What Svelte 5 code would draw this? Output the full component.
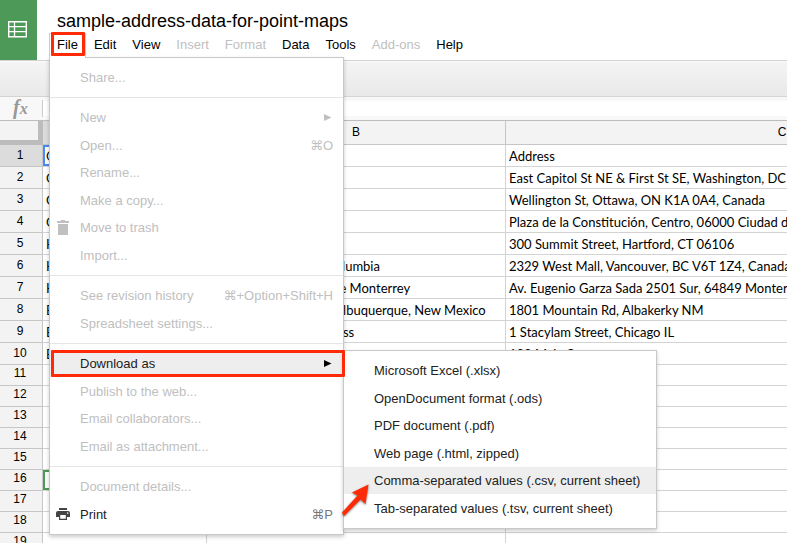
<script>
  const menus = [
    { label: 'Edit' },
    { label: 'View' },
    { label: 'Insert', off: true },
    { label: 'Format', off: true },
    { label: 'Data' },
    { label: 'Tools' },
    { label: 'Add-ons', off: true },
    { label: 'Help' },
  ];

  const groups = [
    [{ label: 'Share...', off: true }],
    [
      { label: 'New', off: true, arrow: true },
      { label: 'Open...', off: true, keys: '⌘O' },
      { label: 'Rename...', off: true },
      { label: 'Make a copy...', off: true },
      { label: 'Move to trash', off: true, icon: 'trash' },
      { label: 'Import...', off: true },
    ],
    [
      { label: 'See revision history', off: true, keys: '⌘+Option+Shift+H' },
      { label: 'Spreadsheet settings...', off: true },
    ],
    [
      { label: 'Download as', arrow: true, active: true },
      { label: 'Publish to the web...', off: true },
      { label: 'Email collaborators...', off: true },
      { label: 'Email as attachment...', off: true },
    ],
    [
      { label: 'Document details...', off: true },
      { label: 'Print', icon: 'print', keys: '⌘P' },
    ],
  ];

  const formats = [
    'Microsoft Excel (.xlsx)',
    'OpenDocument format (.ods)',
    'PDF document (.pdf)',
    'Web page (.html, zipped)',
    'Comma-separated values (.csv, current sheet)',
    'Tab-separated values (.tsv, current sheet)',
  ];

  const data = [
    ['Group', 'Name', 'Address'],
    ['Capitol', 'United States', 'East Capitol St NE & First St SE, Washington, DC 20004'],
    ['Capitol', 'Canada', 'Wellington St, Ottawa, ON K1A 0A4, Canada'],
    ['Capitol', 'Mexico', 'Plaza de la Constitución, Centro, 06000 Ciudad de México'],
    ['Higher Ed', 'Trinity College', '300 Summit Street, Hartford, CT 06106'],
    ['Higher Ed', 'University of British Columbia', '2329 West Mall, Vancouver, BC V6T 1Z4, Canada'],
    ['Higher Ed', 'Instituto Tecnológico de Monterrey', 'Av. Eugenio Garza Sada 2501 Sur, 64849 Monterrey, Mexico'],
    ['Business', 'Misspelled address in Albuquerque, New Mexico', '1801 Mountain Rd, Albakerky NM'],
    ['Business', 'Misspelled street address', '1 Stacylam Street, Chicago IL'],
    ['Business', 'Incomplete address, street', '123 Main Street'],
  ];
  const rows = Array.from({ length: 40 }, (_, i) => data[i] ?? ['', '', '']);
</script>

<main>
  <header>
    <a class="logo" href="#home" aria-label="Sheets home">
      <svg width="19" height="17" viewBox="0 0 19 17" fill="none" stroke="#fff">
        <path stroke-width="1.4" d="M.7.7h17.6v15H.7z" />
        <path stroke-width="1.3" d="M.7 5.6h17.6M.7 10.6h17.6M6.5.7v15" />
      </svg>
    </a>
    <div class="heading">
      <h1>sample-address-data-for-point-maps</h1>
      <nav>
        <div class="file">
          <button class="file-tab" aria-expanded="true">File</button>
          <div class="menu">
            {#each groups as group}
              <ul>
                {#each group as item}
                  <li class:marked={item.active}>
                    <button class="item" class:active={item.active} disabled={item.off}>
                      <span class="icon">
                        {#if item.icon === 'trash'}
                          <svg width="14" height="15" viewBox="0 0 14 15" fill="currentColor">
                            <path d="M1 1h4V0h4v1h4v2H1zM2 4h10v11H2z" />
                          </svg>
                        {:else if item.icon === 'print'}
                          <svg width="14" height="12" viewBox="0 0 14 12" fill="#444">
                            <path d="M3 0h8v2H3z" />
                            <path fill-rule="evenodd" d="M2 3h10q2 0 2 2v4h-3v3H3V9H0V5q0-2 2-2zM4.200 7v3.800h5.600V7zM11 4.500v1.200h1.300V4.500z" />
                          </svg>
                        {/if}
                      </span>
                      <span class="label">{item.label}</span>
                      {#if item.keys}<span class="keys">{item.keys}</span>{/if}
                      {#if item.arrow}
                        <svg class="arrow" width="8" height="7" viewBox="0 0 8 7" fill="currentColor"><path d="M0 0l7.500 3.500L0 7z" /></svg>
                      {/if}
                    </button>
                    {#if item.active}
                      <div class="submenu">
                        <ul>
                          {#each formats as format, i}
                            <li><button class="item format" class:active={i === 4}>{format}</button></li>
                          {/each}
                        </ul>
                        <svg class="pointer" width="34" height="38" viewBox="0 0 34 38">
                          <path d="M27.500 3.500L11 11.500l5.500 3L1 31.500l2 3.500L19.500 18.500l5 4.500z" fill="#ff2b06" />
                        </svg>
                      </div>
                    {/if}
                  </li>
                {/each}
              </ul>
            {/each}
          </div>
        </div>
        {#each menus as menu}
          <button class="top" disabled={menu.off}>{menu.label}</button>
        {/each}
      </nav>
    </div>
  </header>

  <div class="toolbar"></div>

  <div class="formula">
    <label for="fx"><i>f</i><i class="x">x</i></label>
    <input id="fx" type="text" />
  </div>

  <table>
    <colgroup>
      <col class="num" /><col class="a" /><col class="b" /><col class="c" />
    </colgroup>
    <thead>
      <tr><th class="corner"></th><th class="current">A</th><th>B</th><th>C</th></tr>
    </thead>
    <tbody>
      {#each rows as row, i}
        <tr class:short={i > 9}>
          <th class:current={i === 0}>{i + 1}</th>
          {#each row as cell, j}
            <td class:selected={i === 0 && j === 0} class:other={i === 15 && j === 0}>{cell}</td>
          {/each}
        </tr>
      {/each}
    </tbody>
  </table>
</main>

<style>
  :global(body) {
    margin: 0;
    overflow: hidden;
  }
  main {
    height: 100vh;
    overflow: hidden;
    background: #fff;
    color: #000;
    font-family: 'Liberation Sans', Arial, sans-serif;
    font-size: 13px;
  }
  button {
    border: 0;
    margin: 0;
    background: none;
    font: inherit;
    color: inherit;
  }
  button:disabled {
    color: #c0c0c0;
  }
  header {
    display: flex;
    border-bottom: 1px solid #d2d2d2;
  }
  .logo {
    display: flex;
    align-items: center;
    justify-content: center;
    width: 37px;
    height: 60px;
    box-sizing: border-box;
    padding: 0 2px 2px 0;
    background: #4d9a58;
  }
  .heading {
    padding: 9px 0 0 12px;
  }
  h1 {
    margin: 0;
    padding-left: 8px;
    font-size: 18px;
    line-height: 24px;
    font-weight: 400;
    white-space: nowrap;
  }
  nav {
    display: flex;
  }
  .top {
    height: 24px;
    padding: 0 8px 2px;
  }
  .file {
    position: relative;
    z-index: 1;
  }
  .file-tab {
    position: relative;
    z-index: 2;
    display: block;
    height: 25px;
    padding: 0 7px 4px;
    border: solid #ccc;
    border-width: 1px 1px 0;
    background: #fff;
  }
  .file-tab::after {
    content: '';
    position: absolute;
    inset: -2px 0 2px 1px;
    border: 3px solid #ff2b06;
    border-radius: 1px;
  }
  .menu {
    position: absolute;
    top: 24px;
    left: 0;
    width: 293px;
    border: 1px solid #c8c8c8;
    background: #fff;
    box-shadow: 0 2px 4px rgba(0, 0, 0, 0.2);
  }
  ul {
    margin: 0;
    padding: 6px 0;
    list-style: none;
  }
  .menu > ul + ul {
    border-top: 1px solid #e5e5e5;
  }
  li {
    position: relative;
    height: 27px;
  }
  li:nth-child(even) {
    height: 28px;
  }
  .item {
    display: flex;
    align-items: center;
    width: 100%;
    height: 100%;
    padding: 0 10px 0 0;
    text-align: left;
    white-space: nowrap;
    color: #222;
  }
  .item.active {
    background: #eee;
  }
  .icon {
    display: flex;
    box-sizing: border-box;
    width: 30px;
    padding-left: 6px;
  }
  .label {
    flex: 1;
  }
  .keys {
    color: #777;
    font-family: 'Liberation Sans', 'DejaVu Sans', sans-serif;
  }
  .item:disabled,
  .item:disabled .keys {
    color: #c0c0c0;
  }
  .arrow {
    margin-right: 1px;
  }
  .active .arrow {
    color: #000;
  }
  .marked::after {
    content: '';
    position: absolute;
    inset: 0 -2px 0 1px;
    border: 3px solid #ff2b06;
    border-radius: 1px;
  }
  .submenu {
    position: absolute;
    top: 0;
    left: 293px;
    width: 312px;
    border: 1px solid #c8c8c8;
    background: #fff;
    box-shadow: 0 2px 4px rgba(0, 0, 0, 0.2);
  }
  .format {
    padding-left: 30px;
  }
  .pointer {
    position: absolute;
    left: -3px;
    bottom: 9px;
    filter: drop-shadow(0 1px 1px rgba(0, 0, 0, 0.5));
  }
  .toolbar {
    height: 34px;
    border-top: 1px solid #fafafa;
    border-bottom: 1px solid #d4d4d4;
    background: linear-gradient(#f4f4f4, #e9e9e9);
  }
  .formula {
    display: flex;
    align-items: center;
    height: 23px;
    border-bottom: 1px solid #bdbdbd;
    background: #f8f8f8;
  }
  label {
    box-sizing: border-box;
    width: 43px;
    height: 17px;
    padding-left: 13px;
    border-right: 1px solid #ccc;
    color: #999;
    font: 700 20px/14px 'Liberation Serif', serif;
  }
  label .x {
    font-size: 16px;
  }
  input {
    flex: 1;
    height: 15px;
    box-sizing: border-box;
    padding: 0 4px;
    border: 0;
    background: #fff;
    font: inherit;
  }
  table {
    width: 1059px;
    table-layout: fixed;
    border-spacing: 0;
  }
  .num {
    width: 43px;
  }
  .a {
    width: 164px;
  }
  .b {
    width: 299px;
  }
  th,
  td {
    box-sizing: border-box;
    height: 22px;
    padding: 0;
    border: solid #d3d3d3;
    border-width: 0 1px 1px 0;
    overflow: hidden;
    white-space: nowrap;
    line-height: 16px;
  }
  th {
    border-color: #c6c6c6;
    background: #f3f3f3;
    font-size: 12px;
    font-weight: 400;
  }
  tbody th {
    padding: 0 2px 2px 0;
  }
  thead th {
    height: 24px;
    padding-bottom: 2px;
  }
  th.current {
    background: #dcdcdc;
  }
  .corner {
    border: solid #bcbcbc;
    border-width: 0 5px 5px 0;
  }
  td {
    padding-left: 3px;
    font-family: Lato, 'Open Sans', sans-serif;
    font-size: 13px;
  }
  .short > * {
    height: 21px;
  }
  .short > th {
    padding-bottom: 4px;
  }
  .selected {
    box-shadow: inset 0 0 0 2px #4a8af4;
  }
  .other {
    box-shadow: inset 0 0 0 2px #4d9a58;
  }
</style>
